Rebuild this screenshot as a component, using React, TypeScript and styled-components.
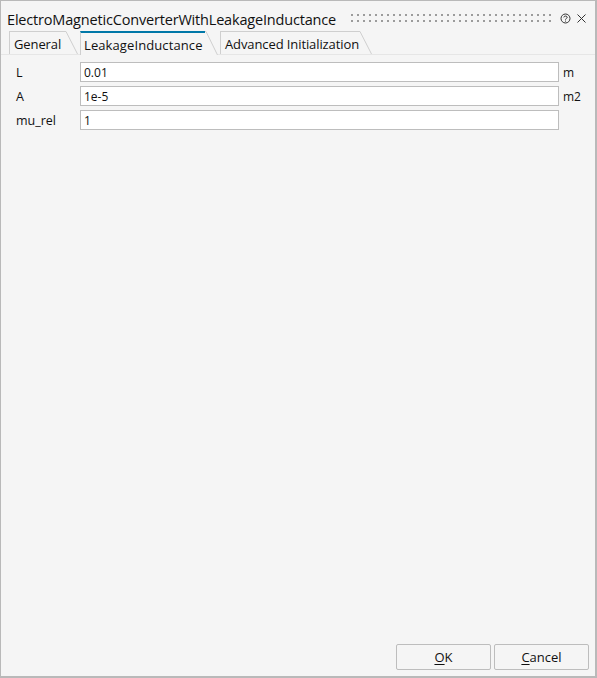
import React from 'react';
import styled, {createGlobalStyle} from 'styled-components';

const GlobalStyle = createGlobalStyle`
    html, body {
        margin: 0;
        padding: 0;
        background: #f5f5f5;
    }
    * {
        box-sizing: border-box;
    }
`;

const Dialog = styled.div`
    width: 597px;
    height: 678px;
    display: flex;
    flex-direction: column;
    background: #f5f5f5;
    border: 1px solid #b9b9b9;
    border-width: 1px 2px 2px 1px;
    font-family: "Open Sans", "Noto Sans", sans-serif;
    font-size: 12px;
    color: #111;
`;

const TitleBar = styled.div`
    height: 30px;
    flex: none;
    display: flex;
    align-items: center;
    padding: 6px 8px 0 6px;
`;

const Title = styled.div`
    width: 344px;
    flex: none;
    font-size: 14.5px;
    letter-spacing: -0.18px;
    white-space: nowrap;
`;

const Grip = styled.div`
    width: 201px;
    height: 8px;
    margin-bottom: 3px;
    background-image: radial-gradient(circle at 1px 1px, #9c9c9c 1.2px, transparent 1.2px);
    background-size: 6px 6px;
`;

const TitleIcon = styled.svg`
    display: block;
    flex: none;
    margin-bottom: 1px;
`;

const IconGroup = styled.div`
    display: flex;
    align-items: center;
    gap: 5px;
    margin-left: auto;
`;

const TabStrip = styled.div`
    height: 24px;
    flex: none;
    display: flex;
    align-items: flex-end;
    padding-left: 8px;
    border-bottom: 1px solid #e6e6e6;
`;

const TabWrap = styled.div<{$active?: boolean}>`
    display: flex;
    height: ${({$active}) => $active ? '24px' : '23px'};
    margin-right: 2px;
    margin-bottom: ${({$active}) => $active ? '-1px' : '0'};
    background: #f5f5f5;
`;

const TabLabel = styled.div<{$active?: boolean; $width: number}>`
    width: ${({$width}) => $width}px;
    display: flex;
    align-items: center;
    padding: 1px 0 0 ${({$active}) => $active ? '3px' : '4px'};
    white-space: nowrap;
    font-size: 13px;
    letter-spacing: ${({$active}) => $active ? '0.1px' : '-0.1px'};
    border-left: 1px solid #cfcfcf;
    border-top: ${({$active}) => $active ? '2px solid #0078a8' : '1px solid #cfcfcf'};
`;

const Body = styled.div`
    flex: 1;
    display: flex;
    flex-direction: column;
    gap: 4px;
    padding: 7px 0 0 15px;
`;

const Row = styled.div`
    display: flex;
    align-items: center;
    height: 20px;
`;

const FieldLabel = styled.div`
    width: 64px;
    flex: none;
    font-size: 12.5px;
`;

const Input = styled.input`
    width: 479px;
    height: 20px;
    flex: none;
    padding: 0 3px;
    background: #fff;
    border: 1px solid #bdbdbd;
    border-radius: 0;
    outline: none;
    font: inherit;
    color: inherit;
`;

const Unit = styled.div`
    margin-left: 4px;
`;

const Footer = styled.div`
    flex: none;
    display: flex;
    justify-content: flex-end;
    gap: 3px;
    padding: 0 6px 6px 0;
`;

const Button = styled.button`
    width: 95px;
    height: 26px;
    padding: 0;
    background: #f5f5f5;
    border: 1px solid #bdbdbd;
    border-radius: 2px;
    font: inherit;
    font-size: 13px;
    color: inherit;

    u {
        text-underline-offset: 2px;
    }
`;

type TabProps = {
    label: string;
    width: number;
    active?: boolean;
}

const Tab = ({label, width, active}: TabProps) => (
    <TabWrap $active={active}>
        <TabLabel $active={active} $width={width}>{label}</TabLabel>
        <svg width="13" height={active ? 24 : 23} style={{display: 'block'}}>
            <path d={`M0 0.5 H1 L12.5 ${active ? 24 : 23}`} fill="none" stroke="#cfcfcf" />
        </svg>
    </TabWrap>
);

const fields = [
    {label: 'L', value: '0.01', unit: 'm'},
    {label: 'A', value: '1e-5', unit: 'm2'},
    {label: 'mu_rel', value: '1', unit: ''},
];

export const App = () => (
    <Dialog>
        <GlobalStyle />
        <TitleBar>
            <Title>ElectroMagneticConverterWithLeakageInductance</Title>
            <Grip />
            <IconGroup>
                <TitleIcon width="11" height="11" viewBox="0 0 11 11">
                    <circle cx="5.5" cy="5.5" r="4.5" fill="none" stroke="#333" />
                    <path d="M3.8 4.4 C3.8 2.6 7.2 2.6 7.2 4.4 C7.2 5.5 5.5 5.4 5.5 6.6 M5.5 7.6 V8.6" fill="none" stroke="#333" />
                </TitleIcon>
                <TitleIcon width="11" height="11" viewBox="0 0 11 11">
                    <path d="M1.5 1.5 L9.5 9.5 M9.5 1.5 L1.5 9.5" fill="none" stroke="#333" />
                </TitleIcon>
            </IconGroup>
        </TitleBar>
        <TabStrip>
            <Tab label="General" width={56} />
            <Tab label="LeakageInductance" width={125} active />
            <Tab label="Advanced Initialization" width={139} />
        </TabStrip>
        <Body>
            {fields.map((field) => (
                <Row key={field.label}>
                    <FieldLabel>{field.label}</FieldLabel>
                    <Input defaultValue={field.value} />
                    {!!field.unit && <Unit>{field.unit}</Unit>}
                </Row>
            ))}
        </Body>
        <Footer>
            <Button><u>O</u>K</Button>
            <Button><u>C</u>ancel</Button>
        </Footer>
    </Dialog>
);

export default App;
